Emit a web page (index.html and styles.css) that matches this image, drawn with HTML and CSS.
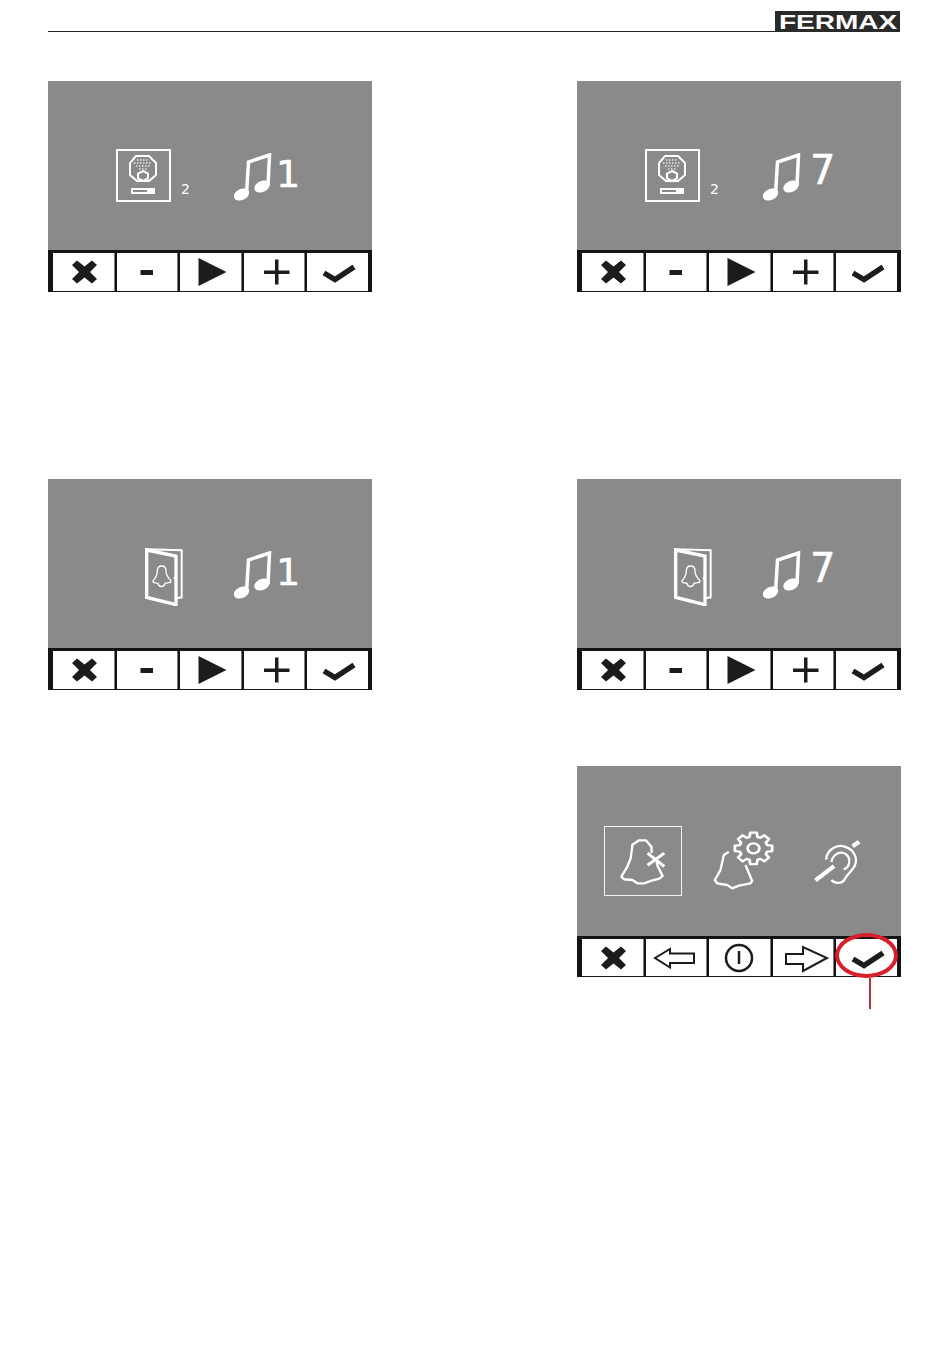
FILE: index.html
```html
<!DOCTYPE html>
<html lang="en">
<head>
<meta charset="utf-8">
<title>FERMAX</title>
<link rel="stylesheet" href="styles.css">
</head>
<body>
<svg class="defs" aria-hidden="true">
  <symbol id="i-x" viewBox="0 0 60 38"><path class="ink" d="M19 12l5-4.500 7.500 6 7.500-6 5 4.500-7 7 7 7-5 4.500-7.500-6-7.500 6-5-4.500 7-7z"/></symbol>
  <symbol id="i-minus" viewBox="0 0 60 38"><rect class="ink" x="23.500" y="17" width="12.500" height="5"/></symbol>
  <symbol id="i-play" viewBox="0 0 60 38"><path class="ink" d="M18.500 5l28 14-28 14z"/></symbol>
  <symbol id="i-plus" viewBox="0 0 60 38"><path class="ink" d="M20 17.500h11v-11h3.500v11h11v3.500h-11v10.500h-3.500v-10.500h-11z"/></symbol>
  <symbol id="i-check" viewBox="0 0 60 38"><path class="ink-line" d="M17 20l11 6.500 19-12.500"/></symbol>
  <symbol id="i-left" viewBox="0 0 60 38"><path class="thin" d="M9 19l15-9v4.500h24v9.500h-24v4.500z"/></symbol>
  <symbol id="i-power" viewBox="0 0 60 38"><circle class="thin-heavy" cx="30" cy="19" r="13"/><path class="thin-heavy" d="M30 12v13"/></symbol>
  <symbol id="i-right" viewBox="0 0 60 38"><path class="thin" d="M13 15h17v-7l24 11-24 13v-7h-17z"/></symbol>
  <symbol id="i-note" viewBox="0 0 38 48">
    <ellipse class="white" cx="7.500" cy="41.500" rx="8" ry="5.500" transform="rotate(-25 7.500 41.500)"/>
    <ellipse class="white" cx="28" cy="33.500" rx="8" ry="5.500" transform="rotate(-25 28 33.500)"/>
    <path class="note-line" d="M12.500 41l2-32 21-7-1.500 31"/>
  </symbol>
  <symbol id="i-cam" viewBox="0 0 55 53">
    <rect class="line" x="1" y="1" width="53" height="51"/>
    <path class="line" d="M20 7h13l7 7v12l-7 6h-12l-7-6v-12z"/>
    <path class="dots" d="M21 11h12M18 14h18M20 17h14M23 20h8"/>
    <path class="line" d="M27 22l5 2.500v5l-5 2.500-5-2.500v-5z"/>
    <rect class="line" x="16" y="40" width="22" height="4"/>
    <rect class="white" x="31" y="39" width="8" height="6"/>
  </symbol>
  <symbol id="i-door" viewBox="72 54 117 174">
    <path class="door-frame" d="M78 58l107 3v141l-17 3"/>
    <path class="door-leaf" d="M80 60l88 18v146l-88-22z"/>
    <path class="door-bell" d="M120 108c8 0 13 6 13 15 0 12 6 20 14 28 2 4 0 7-6 7l-11 2c-3 13-19 13-21 0l-12-2c-5-2-3-6-1-8 7-8 11-15 11-27 0-9 5-15 13-15z"/>
    <rect class="white" x="161" y="141" width="6" height="6"/>
  </symbol>
  <symbol id="i-bell-x" viewBox="78 52 140 146">
    <path class="fine" d="M172 100v-18l-17-20h-20l-20 13-5 40-10 25-18 30 8 8 25 2 15 10h20l20-7 25-7 10-8-15-30-3-12"/>
    <path class="fine-thick" d="M160 100l50 40M160 136l50-36"/>
  </symbol>
  <symbol id="i-bell-gear" viewBox="350 30 185 180">
    <path class="fine" d="M400 95l-15 10-10 45-17 30 7 10 30 5 15 10 20-8 35-7 5-7-20-48"/>
    <g transform="translate(474 85) scale(1.180 1)">
      <path class="fine" d="M34.600-9.900L47.300-8.300 47.300 8.300 34.600 9.900 31.500 17.500 39.300 27.600 27.600 39.300 17.500 31.500 9.900 34.600 8.300 47.300-8.300 47.300-9.900 34.600-17.500 31.500-27.600 39.300-39.300 27.600-31.500 17.500-34.600 9.900-47.300 8.300-47.300-8.300-34.600-9.900-31.500-17.500-39.300-27.600-27.600-39.300-17.500-31.500-9.900-34.600-8.300-47.300 8.300-47.300 9.900-34.600 17.500-31.500 27.600-39.300 39.300-27.600 31.500-17.500z"/>
      <circle class="fine" r="15"/>
    </g>
  </symbol>
  <symbol id="i-ear" viewBox="650 55 150 142">
    <path class="fine" d="M692 120C695 90 725 72 750 82 775 90 790 115 778 140 770 155 755 165 748 180 742 192 720 195 708 182"/>
    <path class="fine" d="M708 128C712 105 735 92 752 104 770 118 762 145 745 150"/>
    <path class="slash" d="M660 183l56-43M772 80l20-14"/>
  </symbol>
</svg>

<div class="page">
  <header class="head">
    <div class="rule"></div>
    <div class="logo"><span class="logo-text">FERMAX</span></div>
  </header>

  <main class="grid">
    <section class="screen">
      <div class="display">
        <svg class="cam"><use href="#i-cam"/></svg>
        <span class="sub">2</span>
        <svg class="note note-cam"><use href="#i-note"/></svg>
        <span class="digit">1</span>
      </div>
      <div class="bar">
        <div class="cell"><svg><use href="#i-x"/></svg></div>
        <div class="cell"><svg><use href="#i-minus"/></svg></div>
        <div class="cell"><svg><use href="#i-play"/></svg></div>
        <div class="cell"><svg><use href="#i-plus"/></svg></div>
        <div class="cell"><svg><use href="#i-check"/></svg></div>
      </div>
    </section>

    <section class="screen">
      <div class="display">
        <svg class="cam"><use href="#i-cam"/></svg>
        <span class="sub">2</span>
        <svg class="note note-cam"><use href="#i-note"/></svg>
        <span class="digit digit-seven">7</span>
      </div>
      <div class="bar">
        <div class="cell"><svg><use href="#i-x"/></svg></div>
        <div class="cell"><svg><use href="#i-minus"/></svg></div>
        <div class="cell"><svg><use href="#i-play"/></svg></div>
        <div class="cell"><svg><use href="#i-plus"/></svg></div>
        <div class="cell"><svg><use href="#i-check"/></svg></div>
      </div>
    </section>

    <section class="screen row-two">
      <div class="display display-door">
        <svg class="door"><use href="#i-door"/></svg>
        <svg class="note note-door"><use href="#i-note"/></svg>
        <span class="digit">1</span>
      </div>
      <div class="bar">
        <div class="cell"><svg><use href="#i-x"/></svg></div>
        <div class="cell"><svg><use href="#i-minus"/></svg></div>
        <div class="cell"><svg><use href="#i-play"/></svg></div>
        <div class="cell"><svg><use href="#i-plus"/></svg></div>
        <div class="cell"><svg><use href="#i-check"/></svg></div>
      </div>
    </section>

    <section class="screen row-two">
      <div class="display display-door">
        <svg class="door"><use href="#i-door"/></svg>
        <svg class="note note-door"><use href="#i-note"/></svg>
        <span class="digit digit-seven">7</span>
      </div>
      <div class="bar">
        <div class="cell"><svg><use href="#i-x"/></svg></div>
        <div class="cell"><svg><use href="#i-minus"/></svg></div>
        <div class="cell"><svg><use href="#i-play"/></svg></div>
        <div class="cell"><svg><use href="#i-plus"/></svg></div>
        <div class="cell"><svg><use href="#i-check"/></svg></div>
      </div>
    </section>

    <section class="screen row-three">
      <div class="display display-menu">
        <div class="selected"><svg class="bell-x"><use href="#i-bell-x"/></svg></div>
        <svg class="bell-gear"><use href="#i-bell-gear"/></svg>
        <svg class="ear"><use href="#i-ear"/></svg>
      </div>
      <div class="bar">
        <div class="cell"><svg><use href="#i-x"/></svg></div>
        <div class="cell"><svg><use href="#i-left"/></svg></div>
        <div class="cell"><svg><use href="#i-power"/></svg></div>
        <div class="cell"><svg><use href="#i-right"/></svg></div>
        <div class="cell"><svg><use href="#i-check"/></svg></div>
      </div>
      <div class="callout-ring"></div>
      <div class="callout-stem"></div>
    </section>
  </main>
</div>
</body>
</html>
```

FILE: styles.css
```css
html, body {
  margin: 0;
  padding: 0;
  background: #fff;
}

.defs {
  position: absolute;
  width: 0;
  height: 0;
}

.page {
  box-sizing: border-box;
  min-height: 1360px;
  padding: 11px 49px 0 48px;
}

.head {
  display: flex;
  align-items: flex-end;
  height: 21px;
  padding-right: 1px;
}

.rule {
  flex: 1;
  height: 21px;
  border-bottom: 1px solid #222;
  box-sizing: border-box;
}

.logo {
  width: 125px;
  height: 21px;
  background: #2b2a2a;
  overflow: hidden;
}

.logo-text {
  display: block;
  padding-left: 4px;
  font: bold 20px/22px "Liberation Sans", Arial, sans-serif;
  color: #fff;
  transform: scaleX(1.4);
  transform-origin: 4px 0;
  white-space: nowrap;
}

.grid {
  display: grid;
  grid-template-columns: 324px 324px;
  justify-content: space-between;
  margin-top: 49px;
}

.row-two {
  margin-top: 187px;
}

.row-three {
  grid-column: 2;
  margin-top: 76px;
}

.screen {
  position: relative;
  height: 211px;
}

.display {
  display: flex;
  align-items: flex-start;
  box-sizing: border-box;
  height: 169px;
  padding: 68px 0 0 68px;
  background: #8a8a8a;
}

.display-door {
  padding-left: 96px;
}

.display-menu {
  height: 170px;
  padding-left: 27px;
  padding-top: 60px;
}

.bar {
  display: grid;
  grid-template-columns: repeat(5, 1fr);
  grid-template-rows: minmax(0, 1fr);
  column-gap: 1px;
  height: 42px;
  box-sizing: border-box;
  padding: 3px 4px 1px 3px;
  background: #141414;
}

.row-three .bar {
  height: 41px;
}

.cell {
  border-left: 2px solid #141414;
  background: #fff;
  min-width: 0;
  min-height: 0;
}

.cell + .cell {
  box-shadow: -1px 0 0 #7d7d7d;
}

.cell svg {
  display: block;
  width: 60px;
  height: 38px;
  overflow: visible;
}

.ink { fill: #1c1c1c; }

.ink-line {
  fill: none;
  stroke: #1c1c1c;
  stroke-width: 5.500;
}

.thin {
  fill: none;
  stroke: #1c1c1c;
  stroke-width: 2;
}

.thin-heavy {
  fill: none;
  stroke: #1c1c1c;
  stroke-width: 2.500;
}

.white { fill: #fff; }

.line {
  fill: none;
  stroke: #fff;
  stroke-width: 2;
}

.dots {
  fill: none;
  stroke: #e6e6e6;
  stroke-width: 1.500;
  stroke-dasharray: 1.500 1.500;
}

.note-line {
  fill: none;
  stroke: #fff;
  stroke-width: 3.500;
}

.door-frame {
  fill: none;
  stroke: #fff;
  stroke-width: 6;
}

.door-leaf {
  fill: #8a8a8a;
  stroke: #fff;
  stroke-width: 10;
}

.door-bell {
  fill: none;
  stroke: #fff;
  stroke-width: 4;
  transform: translate(5px, 0);
}

.fine {
  fill: none;
  stroke: #fff;
  stroke-width: 7;
  stroke-linejoin: round;
}

.fine-thick {
  fill: none;
  stroke: #fff;
  stroke-width: 9;
}

.slash {
  fill: none;
  stroke: #fff;
  stroke-width: 13;
}

.cam {
  width: 55px;
  height: 53px;
  flex: none;
}

.sub {
  margin: 32px 0 0 10px;
  font: 14px/16px "DejaVu Sans", sans-serif;
  color: #fff;
}

.note {
  width: 38px;
  height: 48px;
  flex: none;
  margin-top: 4px;
}

.note-cam {
  margin-left: 44px;
}

.note-door {
  margin-left: 51px;
}

.door {
  width: 39px;
  height: 58px;
  flex: none;
  margin-top: 1px;
}

.digit {
  margin: 7px 0 0 4px;
  font: 38px/37px "DejaVu Sans", sans-serif;
  color: #fff;
  -webkit-text-stroke: 0.500px #fff;
}

.digit-seven {
  margin: 3px 0 0 9px;
  font-size: 40px;
}

.selected {
  display: flex;
  align-items: flex-start;
  box-sizing: border-box;
  width: 78px;
  height: 70px;
  padding: 10px 0 0 15px;
  border: 1.500px solid #f2f2f2;
  flex: none;
}

.bell-x {
  width: 47px;
  height: 49px;
  flex: none;
}

.bell-gear {
  width: 62px;
  height: 60px;
  flex: none;
  margin: 4px 0 0 30px;
}

.ear {
  width: 50px;
  height: 47px;
  flex: none;
  margin: 12px 0 0 38px;
}

.callout-ring {
  position: absolute;
  left: 258px;
  top: 167px;
  width: 63px;
  height: 45px;
  box-sizing: border-box;
  border: 4px solid #d8202c;
  border-radius: 50%;
}

.callout-stem {
  position: absolute;
  left: 292px;
  top: 212px;
  width: 2px;
  height: 31px;
  background: #b8323e;
}
```
